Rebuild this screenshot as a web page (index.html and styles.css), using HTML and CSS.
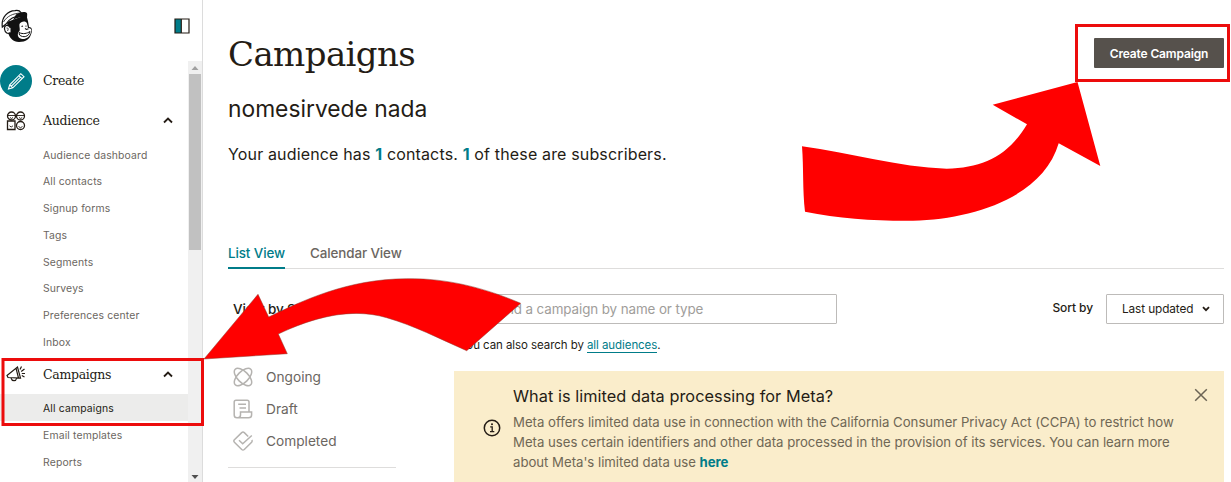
FILE: index.html
```
<!DOCTYPE html>
<html lang="en">
<head>
    <meta charset="utf-8">
    <title>Campaigns</title>
    <link rel="stylesheet" href="styles.css">
</head>
<body>

<div class="page">

    <div class="sidebar">
        <div class="sidebar-top">
            <svg class="logo" width="32" height="36" viewBox="0 0 32 36">
                <path d="M6 13 L25 6 C27 10 27.500 15 28 18 C31 18 31.500 21 30.500 24 C29 30 25 33 18 33 C12 33 9 29 7.500 25 Z" fill="#111"/>
                <path d="M1.300 18 C0 8 7 1.800 14 1.600 C17 1 19 2 20 3.500 L21 6.500 C14 7 8 10 5 15 Z" fill="#fff" stroke="#111" stroke-width="1.2"/>
                <path d="M2.500 13 C6 7 12 4.500 19.500 4" fill="none" stroke="#111" stroke-width=".8"/>
                <path d="M15 5.500 C19 2.500 26 2 26.200 5 L26 9 C21 7.500 17 8 12 11 Z" fill="#111"/>
                <path d="M9.500 19 C7 15 3 16 3.500 20 C4 24 7 25.500 9.500 23.500" fill="#fff" stroke="#111" stroke-width="1.2"/>
                <path d="M5.500 19 C7.500 18.500 7.500 20.500 6.500 22" fill="none" stroke="#111" stroke-width=".8"/>
                <path d="M18.500 15 C20 12 25 11.500 26 14.500 L27 19 C30 18.500 31 21 30 23 C29 28 25 30.500 21 30 C17 29 16 26 17.500 23 C20 22 18 18 18.500 15 Z" fill="#fff"/>
                <path d="M18 23.500 C22 25.500 26 24.500 29 22.500 C28 28 22 29 18.500 26 Z" fill="#fff" stroke="#111" stroke-width="1"/>
                <path d="M20.500 17.500 L22 17 M24.500 17 L25.500 17.300 M24 19.500 L25.500 20.500 L27.500 19.800" fill="none" stroke="#111" stroke-width="1.1"/>
            </svg>
            <svg class="panel-toggle" width="16" height="16" viewBox="0 0 16 16">
                <path d="M1 1 H15 V15 H1 Z" fill="#fff"/>
                <path d="M1 1 H7 V15 H1 Z" fill="#007c89"/>
                <path d="M1 1 H15 V15 H1 Z M7.300 1 V15" fill="none" stroke="#241c15" stroke-width="1.2"/>
            </svg>
        </div>

        <div class="sidebar-body">
            <div class="nav">
                <div class="nav-head create">
                    <span class="nav-icon">
                        <svg width="32" height="32" viewBox="0 0 32 32">
                            <circle cx="16" cy="16" r="16" fill="#007c89"/>
                            <path d="M8.500 24 L9.700 19.800 L20.800 8.700 L24 11.700 L12.800 22.800 Z M9.700 19.800 L12.800 22.800 M18.800 10.700 L22 13.700 M11.200 21.300 L20.400 12.200" fill="none" stroke="#fff" stroke-width="1.1"/>
                        </svg>
                    </span>
                    <span class="nav-title">Create</span>
                </div>

                <div class="nav-head">
                    <span class="nav-icon">
                        <svg width="20" height="20" viewBox="0 0 20 20" fill="none" stroke="#241c15" stroke-width="1.3">
                            <circle cx="5.500" cy="5" r="4"/>
                            <circle cx="14.500" cy="5" r="4"/>
                            <path d="M1.500 10 H9 V18.500 H1.500 Z"/>
                            <circle cx="14.500" cy="14.500" r="4"/>
                            <path d="M1.500 4.500 H9.500 M11 4.500 H18.500 M4 6.500 L5.500 7.500 L7 6.500 M13 6.500 L14.700 7.500 L16.200 6.500 M3.500 14.800 L5.200 16 L7 14.800 M12.500 15.500 L14.500 16.700 L16.500 15.500" stroke-width=".9"/>
                        </svg>
                    </span>
                    <span class="nav-title">Audience</span>
                    <svg class="chevron" width="10" height="7" viewBox="0 0 10 7"><path d="M1 5.500 L5 1.600 L9 5.500" fill="none" stroke="#241c15" stroke-width="1.8"/></svg>
                </div>
                <div class="nav-item">Audience dashboard</div>
                <div class="nav-item">All contacts</div>
                <div class="nav-item">Signup forms</div>
                <div class="nav-item">Tags</div>
                <div class="nav-item">Segments</div>
                <div class="nav-item">Surveys</div>
                <div class="nav-item">Preferences center</div>
                <div class="nav-item">Inbox</div>

                <div class="nav-head">
                    <span class="nav-icon">
                        <svg width="20" height="18" viewBox="0 0 20 18" fill="none" stroke="#241c15" stroke-width="1.2">
                            <path d="M1 10.500 L11.500 2 L14.500 13 L2 12.500 Z M10 3.200 L12.500 13 M5 13 C6 16.500 10 16.500 10.500 13.500"/>
                            <path d="M14 4.500 L15.500 1.500 M15.200 6.500 L18.500 4 M15.800 8.500 H19 M15.800 10.500 L18.500 12"/>
                        </svg>
                    </span>
                    <span class="nav-title">Campaigns</span>
                    <svg class="chevron" width="10" height="7" viewBox="0 0 10 7"><path d="M1 5.500 L5 1.600 L9 5.500" fill="none" stroke="#241c15" stroke-width="1.8"/></svg>
                </div>
                <div class="nav-item active">All campaigns</div>
                <div class="nav-item">Email templates</div>
                <div class="nav-item">Reports</div>
            </div>

            <div class="scrollbar">
                <svg width="8" height="4" viewBox="0 0 8 4"><path d="M4 0 L7.500 4 H0.500 Z" fill="#a0a0a0"/></svg>
                <div class="thumb"></div>
                <svg class="scroll-down" width="8" height="4" viewBox="0 0 8 4"><path d="M0.500 0 H7.500 L4 4 Z" fill="#505050"/></svg>
            </div>
        </div>
    </div>

    <div class="main">
        <div class="header">
            <div>
                <h1>Campaigns</h1>
                <h2>nomesirvede nada</h2>
                <p class="summary">Your audience has <b>1</b> contacts. <b>1</b> of these are subscribers.</p>
            </div>
            <button class="create-btn">Create Campaign</button>
        </div>

        <div class="tabs">
            <span class="tab selected">List View</span>
            <span class="tab">Calendar View</span>
        </div>

        <div class="content">
            <div class="filters">
                <div class="filters-title">View by Status</div>
                <div class="filter">
                    <svg width="20" height="20" viewBox="0 0 20 20" fill="none" stroke="#b5b3b0" stroke-width="1.5">
                        <ellipse cx="10" cy="10" rx="11" ry="5.500" transform="rotate(45 10 10)"/>
                        <ellipse cx="10" cy="10" rx="11" ry="5.500" transform="rotate(-45 10 10)"/>
                    </svg>
                    <span>Ongoing</span>
                </div>
                <div class="filter">
                    <svg width="20" height="20" viewBox="0 0 20 20" fill="none" stroke="#b5b3b0" stroke-width="1.5">
                        <path d="M16 12.500 V3 Q16 1.200 14.200 1.200 H3 Q1.200 1.200 1.200 3 V16 Q1.200 18.800 4 18.800 H15.500 Q18.600 18.800 18.600 16 V13 H7.500 V16 Q7.500 18.800 4.500 18.800 M5.200 5.200 H13 M6.500 9 H13"/>
                    </svg>
                    <span>Draft</span>
                </div>
                <div class="filter">
                    <svg width="20" height="20" viewBox="0 0 20 20" fill="none" stroke="#b5b3b0" stroke-width="1.5">
                        <path d="M15.200 5.500 L11.300 1.600 Q10 .5 8.700 1.600 L1.400 8.800 Q.3 10 1.400 11.200 L8.700 18.500 Q10 19.500 11.300 18.500 L18.600 11.200 Q19.500 10 18.800 9 M6 9.200 L9.700 12.800 L18.800 4.500"/>
                    </svg>
                    <span>Completed</span>
                </div>
            </div>

            <div class="results">
                <div class="toolbar">
                    <div class="search">Find a campaign by name or type</div>
                    <div class="sort">
                        <span class="sort-label">Sort by</span>
                        <div class="select">
                            <span>Last updated</span>
                            <svg width="8" height="6" viewBox="0 0 8 6"><path d="M1 1.200 L4 4.200 L7 1.200" fill="none" stroke="#241c15" stroke-width="1.8"/></svg>
                        </div>
                    </div>
                </div>
                <div class="hint">You can also search by <a class="link">all audiences</a>.</div>

                <div class="notice">
                    <svg class="notice-icon" width="18" height="18" viewBox="0 0 18 18">
                        <circle cx="9" cy="9" r="7.700" fill="none" stroke="#241c15" stroke-width="1.5"/>
                        <path d="M7.200 7.800 H9.200 V12.500 M7 12.600 H11.300" fill="none" stroke="#241c15" stroke-width="1.3"/>
                        <circle cx="9" cy="5.200" r="1" fill="#241c15"/>
                    </svg>
                    <div class="notice-text">
                        <div class="notice-title">What is limited data processing for Meta?</div>
                        <div>Meta offers limited data use in connection with the California Consumer Privacy Act (CCPA) to restrict how</div>
                        <div>Meta uses certain identifiers and other data processed in the provision of its services. You can learn more</div>
                        <div>about Meta's limited data use <b>here</b></div>
                    </div>
                    <svg class="close" width="14" height="14" viewBox="0 0 14 14"><path d="M1.200 1.200 L12.800 12.800 M12.800 1.200 L1.200 12.800" stroke="#6b6455" stroke-width="1.5"/></svg>
                </div>
            </div>
        </div>
    </div>

    <!-- Red marks drawn over the page -->
    <svg class="marks" width="1231" height="482" viewBox="0 0 1231 482">
        <rect x="1076.500" y="25.500" width="152" height="55" fill="none" stroke="#ec0c0c" stroke-width="3"/>
        <rect x="3" y="359.500" width="199.500" height="65" fill="none" stroke="#ec0c0c" stroke-width="3"/>
        <path d="M802 146.300 C850 153 898 167 946.700 168.700 C983 168 1008 156 1027 124.300 L992.700 104.700 L1077.500 82 L1100.300 166 L1058.700 143.300 C1043 197 974 219 913 220.700 C876 221 840 219 805 211.700 C802.500 190 803.700 168 802 146.300 Z" fill="#f00"/>
        <path d="M204 359 L258 294.300 L268.700 317 C302 301 347 279 406.700 278.700 C447 278 485 288 520.700 303.300 L466.700 350.700 C438 338 415 326 386.700 317.700 C350 307 312 318 278.300 334 L287.300 353.700 Z" fill="#f00" stroke="#8b3a2e" stroke-width=".5"/>
    </svg>

</div>

</body>
</html>
```
FILE: styles.css
```
* { box-sizing: border-box; }

body {
    margin: 0;
    background: #fff;
    color: #241c15;
    font-family: Inter, "Liberation Sans", sans-serif;
    overflow: hidden;
}

.page {
    position: relative;
    display: flex;
    width: 1231px;
    height: 482px;
    overflow: hidden;
}

svg { flex: none; }

/* Sidebar */
.sidebar {
    flex: none;
    display: flex;
    flex-direction: column;
    width: 203px;
    border-right: 1px solid #dcdcdc;
}

.sidebar-top {
    display: flex;
    justify-content: space-between;
    height: 61px;
    padding: 9px 12px 0 1px;
}

.panel-toggle { margin-top: 9px; }

.sidebar-body {
    display: flex;
    flex: 1;
    min-height: 0;
}

.nav { width: 188px; }

.nav-head {
    display: flex;
    align-items: center;
    height: 39.9px;
    padding-right: 15px;
}

.nav-icon {
    display: flex;
    justify-content: center;
    width: 32px;
    margin-right: 11px;
}

.nav-title {
    flex: 1;
    font-family: "DejaVu Serif", serif;
    font-size: 12.5px;
    letter-spacing: -0.3px;
}

.nav-item {
    height: 26.7px;
    padding: 1px 0 0 43px;
    font-size: 10.4px;
    line-height: 27px;
    letter-spacing: 0.15px;
    color: #6b6661;
    white-space: nowrap;
}

.active {
    background: #ececeb;
    color: #241c15;
}

.scrollbar {
    display: flex;
    flex-direction: column;
    align-items: center;
    width: 14px;
    padding: 5px 0 3px;
    background: #f0f0f0;
}

.thumb {
    width: 12px;
    height: 176px;
    margin-top: 4px;
    background: #c1c1c1;
}

.scroll-down { margin-top: auto; }

/* Main column */
.main {
    flex: 1;
    padding: 28px 7px 0 25px;
}

.header {
    display: flex;
    justify-content: space-between;
    align-items: flex-start;
    height: 208px;
}

h1 {
    margin: 0;
    font-family: "DejaVu Serif", serif;
    font-size: 34px;
    font-weight: 400;
    line-height: 52px;
    letter-spacing: -0.6px;
}

h2 {
    margin: 13px 0 0;
    font-size: 22.8px;
    font-weight: 400;
    line-height: 32px;
}

.summary {
    margin: 17px 0 0;
    font-size: 16px;
    line-height: 24px;
    letter-spacing: 0.15px;
}

b { color: #007c89; }

.create-btn {
    width: 130px;
    height: 30px;
    margin-top: 10px;
    padding: 0;
    border: 0;
    border-radius: 1px;
    background: #56514c;
    color: #fff;
    font-family: inherit;
    font-size: 12px;
    font-weight: 600;
    letter-spacing: -0.15px;
}

.tabs {
    display: flex;
    gap: 25px;
    height: 33px;
    border-bottom: 1px solid #dedddc;
}

.tab {
    height: 33px;
    font-size: 13.4px;
    font-weight: 500;
    line-height: 34px;
    letter-spacing: -0.1px;
    color: #6b6661;
}

.selected {
    border-bottom: 2px solid #007c89;
    color: #007c89;
}

.content {
    display: flex;
    justify-content: space-between;
    padding-top: 25px;
}

.filters {
    width: 168px;
    height: 174px;
    border-bottom: 1px solid #dedddc;
}

.filters-title {
    height: 67px;
    padding-left: 5px;
    font-size: 13.5px;
    font-weight: 500;
    line-height: 31px;
    letter-spacing: -0.1px;
}

.filter {
    display: flex;
    align-items: center;
    gap: 13px;
    height: 32px;
    padding-left: 5px;
    font-size: 13.7px;
    color: #6b6661;
}

.filter span { margin-top: -1px; }

.results { width: 770.5px; }

.toolbar {
    display: flex;
    justify-content: space-between;
}

.search {
    width: 383px;
    height: 30px;
    padding-left: 40.5px;
    border: 1px solid #bdbbb9;
    border-radius: 1px;
    font-size: 13.4px;
    line-height: 28px;
    letter-spacing: -0.1px;
    color: #a09d9a;
}

.sort {
    display: flex;
    gap: 13px;
}

.sort-label {
    font-size: 12px;
    font-weight: 500;
    line-height: 28px;
    letter-spacing: -0.1px;
}

.select {
    display: flex;
    align-items: center;
    gap: 9px;
    width: 118px;
    height: 30px;
    padding-left: 15px;
    border: 1px solid #bdbbb9;
    border-radius: 1px;
    font-size: 11.8px;
    letter-spacing: -0.1px;
    white-space: nowrap;
}

.hint {
    margin-top: 12px;
    padding-left: 6px;
    font-size: 11.5px;
    line-height: 18px;
    letter-spacing: -0.07px;
}

.link {
    border-bottom: 1px solid #007c89;
    color: #007c89;
}

.notice {
    display: flex;
    height: 120px;
    margin-top: 17px;
    padding: 13px 16px 0 29.5px;
    background: #faedcb;
}

.notice-icon { margin-top: 35px; }

.notice-text {
    flex: 1;
    padding-left: 12px;
    font-size: 13.2px;
    line-height: 20px;
    letter-spacing: -0.02px;
    color: #6f6755;
    white-space: nowrap;
}

.notice-title {
    height: 28px;
    font-size: 16.3px;
    line-height: 24px;
    letter-spacing: 0.05px;
    color: #241c15;
}

.close { margin-top: 4px; }

/* Overlay */
.marks {
    position: absolute;
    top: 0;
    left: 0;
}
```
